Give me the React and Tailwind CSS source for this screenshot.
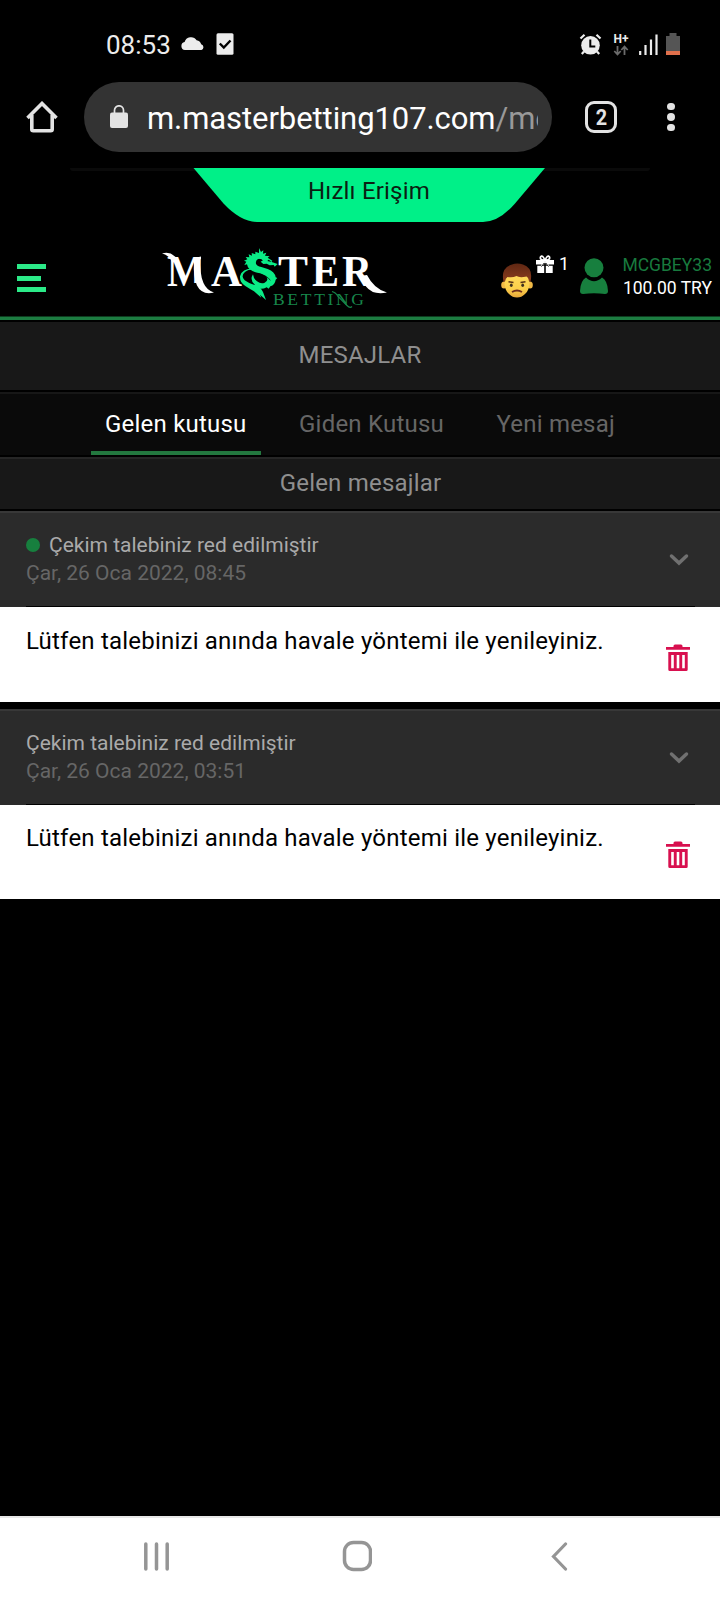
import React, { useState } from 'react';

const tabs = [
  { id: 'inbox', label: 'Gelen kutusu' },
  { id: 'sent', label: 'Giden Kutusu' },
  { id: 'new', label: 'Yeni mesaj' }
];

const messages = [
  {
    id: 1,
    unread: true,
    title: 'Çekim talebiniz red edilmiştir',
    date: 'Çar, 26 Oca 2022, 08:45',
    body: 'Lütfen talebinizi anında havale yöntemi ile yenileyiniz.'
  },
  {
    id: 2,
    unread: false,
    title: 'Çekim talebiniz red edilmiştir',
    date: 'Çar, 26 Oca 2022, 03:51',
    body: 'Lütfen talebinizi anında havale yöntemi ile yenileyiniz.'
  }
];

const StatusBar = () => (
  <div className="flex h-[82px] items-center pt-[6px] pl-[106px] pr-[40px] text-[#ececec]">
    <span className="w-[75px] pt-px text-[26px] leading-none">08:53</span>
    <svg className="h-[14px] w-6" viewBox="0 0 24 14" fill="#ececec">
      <path d="M4 13a4 4 0 0 1-.4-7.9A6.600 6.600 0 0 1 15.600 3.300a5.500 5.500 0 0 1 4.600 4A3 3 0 0 1 20.500 13z" />
    </svg>
    <svg className="ml-[11px] h-[22px] w-[18px]" viewBox="0 0 18 22">
      <rect x="0.500" y="0.300" width="17" height="21.400" rx="1.500" fill="#ececec" />
      <path d="M3.800 10.500l4 4 6.700-7" fill="none" stroke="#000" strokeWidth="2.400" />
    </svg>
    <div className="ml-auto flex items-center">
      <svg className="h-[23px] w-[24px]" viewBox="0 0 24 23">
        <circle cx="11.500" cy="12.300" r="9.300" fill="#ececec" />
        <path d="M1.500 5.500l4-3.800M21.500 5.500l-4-3.800M5 18.500L2.800 21M18 18.500l2.200 2.500" stroke="#ececec" strokeWidth="2.200" />
        <path d="M11.300 6.500v7h5" fill="none" stroke="#000" strokeWidth="2" />
      </svg>
      <div className="ml-[10px] flex w-[16px] flex-col items-center pt-px">
        <span className="text-[12px] font-bold leading-[11px]">H+</span>
        <svg className="h-[11px] w-[16px]" viewBox="0 0 16 11" fill="none" stroke="#6b6b6b" strokeWidth="1.800">
          <path d="M4.500 1v8.500M1.300 6l3.200 3.500L7.700 6M11.500 10V1.500M8.300 5l3.200-3.500L14.700 5" />
        </svg>
      </div>
      <svg className="ml-[9px] h-[21px] w-[20px]" viewBox="0 0 20 21" stroke="#ececec" strokeWidth="2.200">
        <path d="M2.200 17v4M7.500 11v10M13 5.500V21M18.500 0.500V21" />
      </svg>
      <svg className="ml-[8px] h-[22px] w-[14px]" viewBox="0 0 14 22">
        <path d="M3.500 0h7v3H14v15H0V3h3.500z" fill="#555" />
        <path d="M0 18h14v4H0z" fill="#e0704c" />
      </svg>
    </div>
  </div>
);

const AddressBar = () => (
  <div className="flex h-[86px] items-start">
    <div className="flex h-[70px] w-[84px] items-center pl-[26px]">
      <svg className="h-[32px] w-[32px]" viewBox="0 0 32 32" fill="none" stroke="#e3e3e3" strokeWidth="3.600">
        <path d="M1.500 17L16 2.500 30.500 17M5.800 14v14.300q0 1.500 1.500 1.500h17.400q1.500 0 1.500-1.500V14" />
      </svg>
    </div>
    <div className="flex h-[70px] w-[468px] items-center rounded-full bg-[#333] pl-[26px] pr-[14px]">
      <svg className="h-[24px] w-[18px] shrink-0" viewBox="0 0 18 24">
        <rect y="7.500" width="18" height="15.500" rx="2" fill="#e3e3e3" />
        <path d="M4.500 8V5.300a4.500 4.500 0 0 1 9 0V8" fill="none" stroke="#e3e3e3" strokeWidth="1.700" />
      </svg>
      <div className="ml-[19px] flex-1 overflow-hidden whitespace-nowrap pt-[3px] text-[31px] leading-[44px] tracking-[-0.080px] text-white">
        m.masterbetting107.com<span className="text-[#999]">/me</span>
      </div>
    </div>
    <div className="flex h-[70px] flex-1 items-center pl-[33px]">
      <div className="flex h-[32px] w-[32px] items-center justify-center rounded-[9px] border-[3.500px] border-[#e3e3e3]">
        <span className="scale-x-90 pt-px text-[22px] font-bold leading-none text-[#e3e3e3]">2</span>
      </div>
      <div className="ml-[50px] flex flex-col gap-[3px]">
        <span className="h-[7.500px] w-[7.500px] rounded-full bg-[#e3e3e3]" />
        <span className="h-[7.500px] w-[7.500px] rounded-full bg-[#e3e3e3]" />
        <span className="h-[7.500px] w-[7.500px] rounded-full bg-[#e3e3e3]" />
      </div>
    </div>
  </div>
);

const QuickAccess = () => (
  <div className="relative flex h-[54px] justify-center">
    <div className="absolute top-0 h-[3px] w-[580px] rounded-b-full bg-[#0a0a0a]" />
    <svg className="absolute left-[193px] top-0 h-[54px] w-[353px]" viewBox="0 0 353 54">
      <path d="M0.500 0H352L322 35.500Q306 54 290 54H64Q48 54 30.500 35.500z" fill="#00f088" />
    </svg>
    <span className="relative pl-[18px] pt-[9px] text-[24px] leading-[28px] tracking-[0.2px] text-[#0b1f12]">Hızlı Erişim</span>
  </div>
);

const Logo = () => (
  <svg className="h-[70px] w-[236px]" viewBox="156 240 236 70" fontFamily="'Liberation Serif', serif">
    <g fill="#fff" fontWeight="bold" fontSize="45">
      <text x="167" y="285.500" textLength="38" lengthAdjust="spacingAndGlyphs">M</text>
      <path d="M201 255h6v32h-18v-4h12z" fill="#000" />
      <text x="211" y="285.500" textLength="31" lengthAdjust="spacingAndGlyphs">A</text>
      <text x="278" y="285.500" textLength="30" lengthAdjust="spacingAndGlyphs">T</text>
      <text x="312" y="285.500" textLength="27" lengthAdjust="spacingAndGlyphs">E</text>
      <text x="342" y="285.500" textLength="30" lengthAdjust="spacingAndGlyphs">R</text>
      <path d="M162 253.500q10-3 16 7l-6 2q-2-7-10-9z" />
      <path d="M194 262l6.500-6q-1 19 3 27 3 7 10.500 9.500-12 3-17-7-4-9-3-23.500z" />
      <path d="M360 276l7-1q7 14 20 17.500-14 3-21-6z" />
    </g>
    <text x="273" y="304.500" fontSize="17.500" fill="#17864b" textLength="91" lengthAdjust="spacing">BETTING</text>
    <path d="M332 291.500q4 1 6 5l9 9q3 3 5 1" fill="none" stroke="#17864b" strokeWidth="1.200" />
    {/* dragon */}
    <g transform="translate(150 235) scale(0.33333)" fill="#0aec86">
      <path d="M383 87l-9 8-3-5-12 1-9-5-10 1-8-7 7-4-12-5q-11 4-9 15 2 7 16 10l19 6q22 8 24 25l5 2-5 5q-2 16-16 20l-5 7-6-4q-14 8-31 2l-14-10 10 1q-17-14-6-32 1 13 12 21 12 9 23 4 14-8 4-19-8-8-26-11-28-5-31-25l-8 2 6-10-7-3 10-4-5-7 11 1-2-9 10 4-1-8 11 4 0-8 11 4 0-15 6 12 7-5-1 10 10-3-4 9 14 2-6 4 14 9-2 4z" />
      <path d="M320 101q-44-4-50 23-1 19 16 29 14 9 26 16l22 19-4-9 18 16-9-24q-8-16-24-20-19-6-31-15-13-13 1-25 10-9 35-7z" />
      <path d="M352 78l13 3-9-7z" fill="#000" />
      <path d="M320 76q9-7 17-1-11-1-14 6z" fill="#000" />
      <path d="M327 118q24 3 34 18" fill="none" stroke="#000" strokeWidth="2" />
    </g>
  </svg>
);

const AvatarFace = () => (
  <svg className="h-[35px] w-[32px]" viewBox="0 0 32 35">
    <defs>
      <linearGradient id="skin" x1="0" y1="0" x2="0" y2="1">
        <stop offset="0" stopColor="#ffd95a" />
        <stop offset="0.600" stopColor="#fbcf4a" />
        <stop offset="1" stopColor="#e9a83a" />
      </linearGradient>
      <linearGradient id="hair" x1="0" y1="0" x2="0" y2="1">
        <stop offset="0" stopColor="#5f2713" />
        <stop offset="1" stopColor="#8a3d1e" />
      </linearGradient>
    </defs>
    <ellipse cx="3" cy="22" rx="2.800" ry="3.500" fill="#f1b945" />
    <ellipse cx="29" cy="22" rx="2.800" ry="3.500" fill="#f1b945" />
    <path d="M3.500 13Q2.500 27 8 31q3.500 3.500 8 3.500t8-3.500q5.500-4 4.500-18z" fill="url(#skin)" />
    <path d="M2.500 18.500Q-.5 5 11 1.500q5-2 11 0Q32.500 5 29.500 18.500H28q-.5-4-2.500-5-7 1.500-10-.5-4 2-9 1-2 1-2.500 4.500z" fill="url(#hair)" />
    <path d="M7.500 18.800l5 .7M24.500 18.800l-5 .7" stroke="#5a3216" strokeWidth="1.400" />
    <ellipse cx="10.300" cy="22.300" rx="1.400" ry="1.800" fill="#3d3020" />
    <ellipse cx="21.700" cy="22.300" rx="1.400" ry="1.800" fill="#3d3020" />
    <path d="M11 29q5-3 10 0" fill="none" stroke="#6e2d1d" strokeWidth="1.800" />
  </svg>
);

const SiteHeader = () => (
  <header className="flex h-[94px] items-start pt-[18px]">
    <button className="ml-[17px] mt-[24px] flex w-[29px] flex-col gap-[6.500px]">
      <span className="h-[5px] w-[29px] bg-[#2bea88]" />
      <span className="h-[5px] w-[24px] bg-[#2bea88]" />
      <span className="h-[5px] w-[29px] bg-[#2bea88]" />
    </button>
    <div className="ml-[110px]">
      <Logo />
    </div>
    <div className="ml-[109px] mt-[23px]">
      <AvatarFace />
    </div>
    <svg className="ml-[3px] mt-[15px] h-[18px] w-[18px]" viewBox="0 0 18 18">
      <path d="M0 5h8.200v4.500H0zM9.800 5H18v4.500H9.800zM1.300 10.800h6.900V18H1.300zM9.800 10.800h6.900V18H9.800z" fill="#fff" />
      <path d="M9 5.500Q3.500 5 4.500 2 6.500-1 9 5.500 11.500-1 13.500 2q1 3-4.500 3.500zM9 6l-3.500 5M9 6l3.500 5" fill="none" stroke="#fff" strokeWidth="1.700" />
      <path d="M8.300 8L5.500 11.500M9.700 8l2.800 3.500" stroke="#000" strokeWidth="1" />
    </svg>
    <span className="ml-[5px] mt-[13px] w-[10px] text-[18px] leading-[21px] text-white">1</span>
    <svg className="ml-[11px] mt-[18px] h-[37px] w-[28px]" viewBox="0 0 28 37" fill="#177f3e">
      <circle cx="14" cy="9.700" r="9.500" />
      <path d="M6 19.500q8 7.500 16 0 5.500 3 6 13.500 0 3-3 3-11-1.500-22 0-3 0-3-3 .5-10.500 6-13.500z" />
    </svg>
    <div className="ml-auto mr-[8px] mt-[14px] text-right text-[17.500px] leading-[23px] text-white">
      <div className="text-[#187a3e]">MCGBEY33</div>
      <div>100.00 TRY</div>
    </div>
  </header>
);

const Trash = () => (
  <svg className="h-[28px] w-[26px]" viewBox="0 0 26 28" fill="#d8104f">
    <path d="M1 3h7.500V2q0-1.500 1.500-1.500h6Q17.500.500 17.500 2v1H25v2.800H1z" />
    <path fillRule="evenodd" d="M3.300 8h19.400v17.500q0 1.500-1.500 1.500H4.800q-1.500 0-1.500-1.500zM6.200 11v13.300h2.600V11zM11.700 11v13.300h2.600V11zM17.200 11v13.300h2.600V11z" />
  </svg>
);

const Message = ({ message }) => (
  <article>
    <div className="h-[96px] border-t-2 border-[#383838] bg-[#2b2b2b]">
      <div className="ml-[26px] mr-[25px] flex h-[94px] items-start justify-between border-b border-black pt-[18px]">
        <div className="text-[21px] leading-[28px]">
          <div className="flex items-center text-[#aaa]">
            {message.unread && <span className="mr-[9px] h-[14px] w-[14px] rounded-full bg-[#177f3e]" />}
            {message.title}
          </div>
          <div className="text-[#666]">{message.date}</div>
        </div>
        <svg className="mr-[6px] mt-[22px] h-[13px] w-[20px]" viewBox="0 0 20 13" fill="none" stroke="#707070" strokeWidth="3.500" strokeLinecap="round">
          <path d="M2.500 3L10 10l7.500-7" />
        </svg>
      </div>
    </div>
    <div className="flex h-[94.500px] justify-between bg-white pl-[26px] pr-[29.500px]">
      <p className="pt-[19.600px] text-[24px] leading-[28px] tracking-[0.210px] text-black">{message.body}</p>
      <button className="mt-[36.500px] h-[28px]">
        <Trash />
      </button>
    </div>
  </article>
);

const NavBar = () => (
  <nav className="mt-auto flex h-[84px] items-start border-t-2 border-[#e8e8e8] bg-white pt-[22px]">
    <svg className="ml-[143px] mt-px h-[30px] w-[27px]" viewBox="0 0 27 30" stroke="#959595" strokeWidth="3.500" strokeLinecap="round">
      <path d="M2.800 3v25M13.500 3v25M24.200 3v25" />
    </svg>
    <svg className="ml-[172px] h-[32px] w-[30px]" viewBox="0 0 30 32">
      <rect x="2.500" y="2.500" width="26" height="27" rx="9" fill="none" stroke="#959595" strokeWidth="3.500" />
    </svg>
    <svg className="ml-[179px] mt-px h-[30px] w-[17px]" viewBox="0 0 17 30" fill="none" stroke="#959595" strokeWidth="3.200" strokeLinecap="round">
      <path d="M14.500 3L2.500 15.500l12 12.500" />
    </svg>
  </nav>
);

const App = () => {
  const [activeTab, setActiveTab] = useState('inbox');

  return (
    <div className="flex h-[1600px] w-[720px] flex-col overflow-hidden bg-black font-[Roboto,sans-serif]">
      <StatusBar />
      <AddressBar />
      <QuickAccess />
      <SiteHeader />

      {/* Page title */}
      <div className="h-[4px] border-t border-[#0d3d1f] bg-[#1c7c41]" />
      <h1 className="mt-[2px] h-[68px] bg-[#181818] text-center text-[24px] leading-[66px] tracking-[0.200px] text-[#8f8f8f]">MESAJLAR</h1>

      {/* Tabs */}
      <div className="mt-[2px] flex h-[63px] justify-center gap-[24.500px] border-t-2 border-[#171717] bg-[#0a0a0a]">
        {tabs.map(tab => (
          <button
            key={tab.id}
            onClick={() => setActiveTab(tab.id)}
            className={`h-[61px] border-b-4 px-[14px] pt-[2px] text-[24px] leading-[56px] tracking-[0.210px] ${
              activeTab === tab.id ? 'border-[#23783f] text-white' : 'border-transparent text-[#666]'
            }`}
          >
            {tab.label}
          </button>
        ))}
      </div>
      <h2 className="mt-[2px] h-[52px] border-t-2 border-[#262626] bg-[#181818] pl-px text-center text-[24px] leading-[48px] tracking-[0.200px] text-[#8f8f8f]">
        Gelen mesajlar
      </h2>

      {/* Messages */}
      <div className="mt-[2px] flex flex-col gap-[7px]">
        {messages.map(message => (
          <Message key={message.id} message={message} />
        ))}
      </div>

      <NavBar />
    </div>
  );
};

export default App;
